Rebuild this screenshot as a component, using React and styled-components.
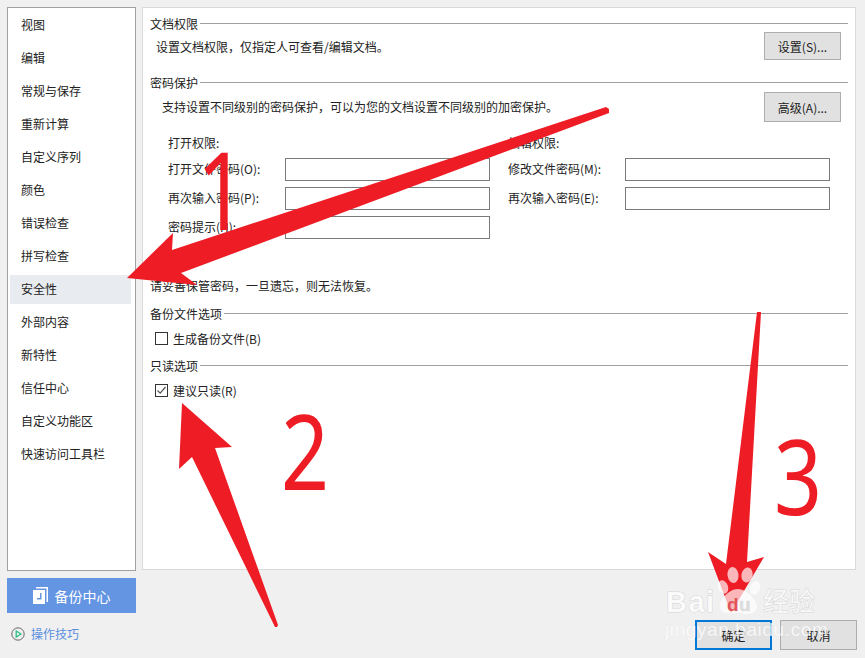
import React from 'react';
import styled, { createGlobalStyle } from 'styled-components';

const GlobalStyle = createGlobalStyle`
	html, body {
		margin: 0;
		padding: 0;
		background: #f0f0f0;
	}
	body {
		font-family: "Noto Sans CJK SC", "Liberation Sans", sans-serif;
		font-size: 12px;
		color: #222;
	}
`;

const Dialog = styled.div`
	position: relative;
	width: 865px;
	height: 658px;
	overflow: hidden;
	box-sizing: border-box;
	padding: 7px 9px 0 7px;
	display: grid;
	grid-template-columns: 129px 1fr;
	grid-template-rows: 564px 1fr;
	column-gap: 6px;
	row-gap: 6px;
	background: #f0f0f0;
`;

const Sidebar = styled.ul`
	margin: 0;
	padding: 3px 4px 0 2px;
	list-style: none;
	background: #fff;
	border: 1px solid #a0a0a0;
	box-sizing: border-box;
`;

const NavItem = styled.li`
	line-height: 28px;
	padding-left: 11px;
	font-size: 12px;
	background: ${(p) => (p.$active ? '#e8ebf0' : 'transparent')};
	height: 29px;
	margin-bottom: 4px;
`;

const Panel = styled.div`
	background: #fff;
	border: 1px solid #d9d9d9;
	box-sizing: border-box;
	height: 563px;
	padding: 7px 7px 0 7px;
	display: flex;
	flex-direction: column;
`;

const GroupTitle = styled.div`
	display: flex;
	align-items: center;
	gap: 2px;
	height: 17px;
	font-size: 12px;
	line-height: 17px;
	&::after {
		content: '';
		flex: 1;
		height: 1px;
		background: #a0a0a0;
	}
`;

const DescRow = styled.div`
	display: flex;
	justify-content: space-between;
	align-items: flex-start;
	padding: ${(p) => p.$pad || '0 7px 0 6px'};
	height: ${(p) => p.$h || '42px'};
	margin-top: ${(p) => p.$mt || '0'};
	line-height: 17px;
`;

const Desc = styled.div`
	padding-top: ${(p) => p.$top || '6px'};
`;

const PushButton = styled.button`
	font: inherit;
	color: #222;
	width: ${(p) => p.$w || '77px'};
	height: ${(p) => p.$h || '28px'};
	background: #e1e1e1;
	border: 1px solid #adadad;
	padding: 0;
	box-sizing: border-box;
	&.primary {
		border: 2px solid #0078d7;
	}
`;

const PasswordGrid = styled.div`
	display: grid;
	grid-template-columns: 340px 340px;
	padding-left: 18px;
	margin-top: 12px;
`;

const PasswordCol = styled.div`
	display: flex;
	flex-direction: column;
`;

const ColTitle = styled.div`
	height: 20px;
	line-height: 17px;
`;

const FieldRow = styled.div`
	display: flex;
	align-items: center;
	height: 29px;
`;

const FieldLabel = styled.label`
	width: 117px;
	white-space: nowrap;
`;

const TextField = styled.div`
	width: 205px;
	height: 23px;
	margin-top: 2px;
	background: #fff;
	border: 1px solid #7a7a7a;
	box-sizing: border-box;
`;

const Notice = styled.div`
	margin-top: 36px;
	height: 17px;
	line-height: 17px;
`;

const Section = styled.div`
	margin-top: ${(p) => p.$mt || '11px'};
`;

const CheckRow = styled.label`
	display: flex;
	align-items: center;
	gap: 5px;
	height: 17px;
	padding-left: 5px;
	margin-top: 8px;
`;

const CheckBox = styled.span`
	width: 13px;
	height: 13px;
	box-sizing: border-box;
	border: 1px solid #333;
	background: #fff;
	display: flex;
	align-items: center;
	justify-content: center;
`;

const LeftFoot = styled.div`
	display: flex;
	flex-direction: column;
	padding-top: 1px;
`;

const BackupButton = styled.div`
	height: 35px;
	background: #6495e3;
	color: #fff;
	display: flex;
	align-items: center;
	justify-content: center;
	gap: 6px;
	font-size: 14px;
`;

const TipLink = styled.div`
	display: flex;
	align-items: center;
	gap: 6px;
	margin: 12px 0 0 4px;
	color: #5a8fdf;
`;

const FootButtons = styled.div`
	display: flex;
	justify-content: flex-end;
	gap: 8px;
	padding-top: 43px;
	margin-right: -1px;
`;

const Overlay = styled.svg`
	position: absolute;
	left: 0;
	top: 0;
	width: 865px;
	height: 658px;
	pointer-events: none;
`;

const Numeral = styled.text`
	font-family: "Noto Sans", sans-serif;
	font-size: ${(p) => p.$size}px;
	fill: #ee1c25;
`;

const Mark = styled.text`
	font-family: ${(p) => p.$cjk ? '"Noto Sans CJK SC", sans-serif' : '"Liberation Sans", sans-serif'};
	font-weight: ${(p) => p.$bold ? 700 : 400};
	font-size: ${(p) => p.$size}px;
	letter-spacing: ${(p) => p.$ls || 0}px;
	fill: ${(p) => p.$fill || 'rgba(255,255,255,0.8)'};
	stroke: rgba(190,190,190,${(p) => p.$so || 0.55});
	stroke-width: ${(p) => p.$sw || 1}px;
	paint-order: stroke;
`;

const navItems = ['视图', '编辑', '常规与保存', '重新计算', '自定义序列', '颜色', '错误检查', '拼写检查', '安全性', '外部内容', '新特性', '信任中心', '自定义功能区', '快速访问工具栏'];

const App = () => {
	return (
		<>
			<GlobalStyle />
			<Dialog>
				<Sidebar>
					{navItems.map((item) => (
						<NavItem key={item} $active={item === '安全性'}>{item}</NavItem>
					))}
				</Sidebar>
				<Panel>
					<GroupTitle>文档权限</GroupTitle>
					<DescRow>
						<Desc>设置文档权限，仅指定人可查看/编辑文档。</Desc>
						<PushButton>设置(S)...</PushButton>
					</DescRow>
					<GroupTitle>密码保护</GroupTitle>
					<DescRow $pad="0 7px 0 12px" $h="30px" $mt="1px">
						<Desc>支持设置不同级别的密码保护，可以为您的文档设置不同级别的加密保护。</Desc>
						<PushButton $h="30px">高级(A)...</PushButton>
					</DescRow>
					<PasswordGrid>
						<PasswordCol>
							<ColTitle>打开权限:</ColTitle>
							<FieldRow><FieldLabel>打开文件密码(O):</FieldLabel><TextField /></FieldRow>
							<FieldRow><FieldLabel>再次输入密码(P):</FieldLabel><TextField /></FieldRow>
							<FieldRow><FieldLabel>密码提示(H):</FieldLabel><TextField /></FieldRow>
						</PasswordCol>
						<PasswordCol>
							<ColTitle>编辑权限:</ColTitle>
							<FieldRow><FieldLabel>修改文件密码(M):</FieldLabel><TextField /></FieldRow>
							<FieldRow><FieldLabel>再次输入密码(E):</FieldLabel><TextField /></FieldRow>
						</PasswordCol>
					</PasswordGrid>
					<Notice>请妥善保管密码，一旦遗忘，则无法恢复。</Notice>
					<Section>
						<GroupTitle>备份文件选项</GroupTitle>
						<CheckRow><CheckBox />生成备份文件(B)</CheckRow>
					</Section>
					<Section $mt="10px">
						<GroupTitle>只读选项</GroupTitle>
						<CheckRow>
							<CheckBox>
								<svg width="11" height="11" viewBox="0 0 11 11">
									<path d="M1.5 5.5 L4.2 8.2 L9.5 2" fill="none" stroke="#555" strokeWidth="1.2" />
								</svg>
							</CheckBox>
							建议只读(R)
						</CheckRow>
					</Section>
				</Panel>
				<LeftFoot>
					<BackupButton>
						<svg width="16" height="17" viewBox="0 0 16 17">
							<path d="M3 0 H15 V15 H13.5 V1.5 H3 Z" fill="#fff" />
							<path d="M0 3 H12 V17 H0 Z M7 6 V11 H4 V12.5 H8.5 V6 Z" fill="#fff" fillRule="evenodd" />
						</svg>
						备份中心
					</BackupButton>
					<TipLink>
						<svg width="14" height="14" viewBox="0 0 14 14">
							<circle cx="7" cy="7" r="6.2" fill="none" stroke="#666" strokeWidth="1" />
							<path d="M5.2 4 L10 7 L5.2 10 Z" fill="none" stroke="#2cbf86" strokeWidth="1.3" />
						</svg>
						操作技巧
					</TipLink>
				</LeftFoot>
				<FootButtons>
					<PushButton className="primary" $h="30px">确定</PushButton>
					<PushButton $h="30px">取消</PushButton>
				</FootButtons>
				<Overlay viewBox="0 0 865 658">
					<polygon points="127,278 173,233 172,250 606,107 609,109 609,113 181,273 197,285" fill="#ee1c25" />
					<polygon points="182,403 232,447 215,448 278,625 277,627 275,627 192,457 179,469" fill="#ee1c25" />
					<polygon points="731,613 708,552 726,564 757,312 761,312 747,562 764,557" fill="#ee1c25" />
					<Numeral transform="translate(197 230) scale(0.8 1)" $size="108">1</Numeral>
					<Numeral transform="translate(281 490) scale(0.8 1)" $size="105">2</Numeral>
					<Numeral transform="translate(774 515) scale(0.8 1)" $size="105">3</Numeral>
					<g fill="rgba(255,255,255,0.68)">
						<ellipse cx="733" cy="575" rx="5.5" ry="8" transform="rotate(-8 733 575)" />
						<ellipse cx="747" cy="575" rx="5.5" ry="7.5" transform="rotate(15 747 575)" />
						<ellipse cx="723" cy="587" rx="5" ry="7" transform="rotate(-20 723 587)" />
						<ellipse cx="755" cy="588" rx="5" ry="7" transform="rotate(20 755 588)" />
						<path d="M738 589 C746 589 757 600 757 606 C757 614 748 615 740 613 C734 612 726 616 721 610 C716 603 728 589 738 589 Z" />
					</g>
					<Mark x="666" y="612" $size="29" $bold $ls="1.5">Bai</Mark>
					<Mark x="727" y="611" $size="19" $bold $sw="0.5" $fill="#e4555b">d</Mark>
					<Mark x="739" y="611" $size="19" $bold $sw="0.5" $fill="#dcdcdc">u</Mark>
					<Mark x="763" y="611" $size="26" $cjk>经验</Mark>
					<Mark x="665" y="636" $size="19" $ls="0.6" $sw="0.5" $so="0.35">jingyan.baidu.com</Mark>
				</Overlay>
			</Dialog>
		</>
	);
};

export default App;
